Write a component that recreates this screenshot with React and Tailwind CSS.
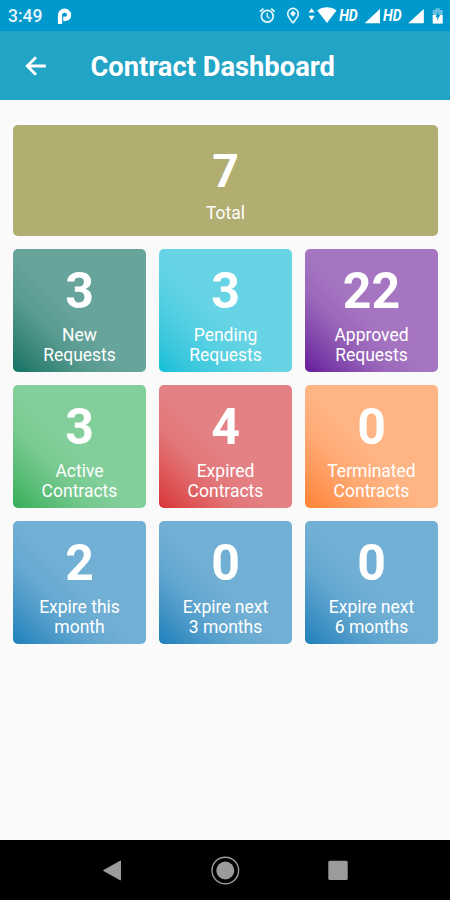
import React from 'react';

const REQUESTS = [
  { value: 3,  lines: ['New', 'Requests'],         bg: 'from-[#0b7363] via-[#599b91] to-[#67a49b]' },
  { value: 3,  lines: ['Pending', 'Requests'],     bg: 'from-[#0bbfd9] via-[#56d0e2] to-[#66d4e4]' },
  { value: 22, lines: ['Approved', 'Requests'],    bg: 'from-[#67179b] via-[#9a66ba] to-[#a575c1]' },
  { value: 3,  lines: ['Active', 'Contracts'],     bg: 'from-[#33ae59] via-[#76c98f] to-[#83cf9b]' },
  { value: 4,  lines: ['Expired', 'Contracts'],    bg: 'from-[#d83035] via-[#e27578] to-[#e48184]' },
  { value: 0,  lines: ['Terminated', 'Contracts'], bg: 'from-[#ff8330] via-[#ffaa74] to-[#ffb483]' },
  { value: 2,  lines: ['Expire this', 'month'],    bg: 'from-[#1a80bb] via-[#62a7d0] to-[#71afd4]' },
  { value: 0,  lines: ['Expire next', '3 months'], bg: 'from-[#1a80bb] via-[#62a7d0] to-[#71afd4]' },
  { value: 0,  lines: ['Expire next', '6 months'], bg: 'from-[#1a80bb] via-[#62a7d0] to-[#71afd4]' },
];

function StatusIcons() {
  return (
    <svg className="block" width="190" height="30" viewBox="256 0 190 30" fill="none" stroke="#e9f8fd">
      {/* alarm */}
      <circle cx="267.3" cy="16.3" r="5.9" strokeWidth="1.7" />
      <path d="M267.2 12.7v4l2.7 1.6" strokeWidth="1.3" />
      <path d="M260 11.6l3.4-3M274.6 11.6l-3.4-3" strokeWidth="1.8" />
      {/* location */}
      <path d="M293 22.8c-2.4-2.9-5.3-6-5.3-9.1a5.3 5.3 0 0 1 10.6 0c0 3.1-2.9 6.2-5.3 9.1z" strokeWidth="1.6" />
      <path d="M293 10.5l2.9 3.1-2.9 3.1-2.9-3.1z" fill="#e9f8fd" stroke="none" />
      {/* data arrows, wifi, signal */}
      <g fill="#fff" stroke="none">
        <path d="M311.6 8.2l3 4.4h-6zM311.6 20.4l3-4.6h-6z" />
        <path d="M317.3 10.6c5.6-4.4 13.6-4.4 19.2 0L327 23z" />
        <path d="M380 9v14.2h-15.4zM423.8 9v14.2h-15.6z" />
      </g>
      <g fill="#fff" stroke="none" className="font-['Roboto'] text-[16.5px] font-bold italic">
        <text x="339.2" y="21.3" textLength="18.6" lengthAdjust="spacingAndGlyphs">HD</text>
        <text x="383" y="21.3" textLength="18.6" lengthAdjust="spacingAndGlyphs">HD</text>
      </g>
      {/* battery */}
      <path d="M435.3 8.3h4.6v1.8h2.8V15h-10v-4.9h2.6z" fill="#63c0e2" stroke="none" />
      <path d="M432.7 15h10v8.6h-10z" fill="#fff" stroke="none" />
      <path d="M438.4 11.5l-3 5.5h1.8v3.6l3-5.6h-1.8z" fill="#0099cc" stroke="none" />
    </svg>
  );
}

function Tile({ value, lines, bg }) {
  return (
    <div className={`flex h-[123px] flex-col items-center rounded-[5px] bg-linear-45 ${bg} via-31% to-46% pt-[17px]`}>
      <p className="text-[50px] font-bold leading-[50px]">{value}</p>
      <p className="mt-[9px] text-center text-[17.5px] leading-5">
        {lines[0]}<br />{lines[1]}
      </p>
    </div>
  );
}

export default function App() {
  return (
    <div className="flex h-[900px] w-[450px] flex-col overflow-hidden bg-[#fafafa] font-['Roboto',sans-serif] text-white">
      <div className="flex h-[31px] shrink-0 items-start justify-between bg-[#0099ce] pl-2 pr-1">
        <div className="flex items-center">
          <span className="pt-px text-[17.5px] font-medium leading-[31px] text-[#e9f8fd]">3:49</span>
          <svg className="ml-[15px]" width="15" height="17" viewBox="0 0 15 17" fill="none">
            <path d="M3 16V7.5C3 4.5 5 2.7 7.6 2.7s4.5 1.8 4.5 4.3-1.9 4.2-4.5 4.2" stroke="#fff" strokeWidth="4.2" />
            <path d="M7.2 8.5v4.5" stroke="#fff" strokeWidth="2" />
          </svg>
        </div>
        <StatusIcons />
      </div>

      <header className="flex h-[69px] shrink-0 items-center bg-[#22a4c6] pl-[25px]">
        <svg width="22" height="20" viewBox="0 0 22 20" fill="none" stroke="#fff" strokeWidth="2.8">
          <path d="M20.8 10H2.5M11 1.2L2.2 10l8.8 8.8" />
        </svg>
        <h1 className="ml-[43.5px] pt-[2px] text-[27.3px] font-bold leading-8">Contract Dashboard</h1>
      </header>

      <main className="flex flex-1 flex-col gap-[13px] pl-[13px] pr-3 pt-[25px]">
        <div className="flex h-[111px] flex-col items-center rounded-[5px] bg-[#b2ad71] pt-[23px]">
          <p className="text-[46.5px] font-bold leading-[46px]">7</p>
          <p className="mt-[9px] text-[17.5px] leading-5">Total</p>
        </div>
        <div className="grid grid-cols-3 gap-[13px]">
          {REQUESTS.map((tile, i) => <Tile key={i} {...tile} />)}
        </div>
      </main>

      <nav className="h-[60px] shrink-0 bg-black">
        <svg className="block" width="450" height="60" viewBox="0 840 450 60">
          <path d="M103.5 870.5l17-9.5v19z" fill="#9b9b9b" stroke="#9b9b9b" strokeWidth="1" strokeLinejoin="round" />
          <circle cx="225.3" cy="870.5" r="13.3" fill="none" stroke="#9b9b9b" strokeWidth="1.4" />
          <circle cx="225.3" cy="870.5" r="9" fill="#9b9b9b" />
          <rect x="328.3" y="860.7" width="19.4" height="19.4" rx="1.5" fill="#9b9b9b" />
        </svg>
      </nav>
    </div>
  );
}
